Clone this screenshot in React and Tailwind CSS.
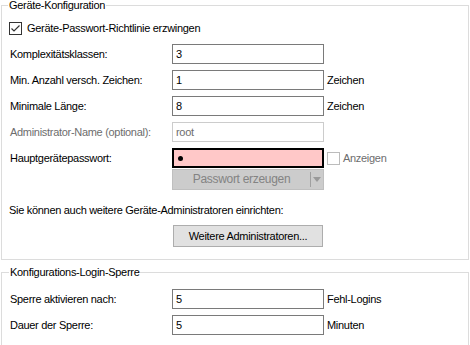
import React from "react";

const font = { fontFamily: '"Liberation Sans", Arial, sans-serif' };

const TextBox = ({ value }) => (
  <div className="w-[152px] h-[20px] border border-[#7a7a7a] bg-white pl-[3px] flex items-center text-black">
    {value}
  </div>
);

const Row = ({ label, value, suffix, className = "" }) => (
  <div className={`flex items-center h-[20px] ${className}`}>
    <div className="w-[162px]">{label}</div>
    <TextBox value={value} />
    {suffix && <span className="ml-[3px]">{suffix}</span>}
  </div>
);

const CheckIcon = () => (
  <svg width="13" height="13" viewBox="0 0 13 13" className="block">
    <rect x="0.5" y="0.5" width="12" height="12" fill="white" stroke="#333333" />
    <path d="M2.5 6.5 L5 9 L10.5 3.5" fill="none" stroke="#333333" strokeWidth="1.2" />
  </svg>
);

export default function App() {
  return (
    <div
      className="w-[470px] h-[345px] bg-white text-black text-[11px] leading-[13px] tracking-[-0.3px] overflow-hidden"
      style={font}
    >
      <fieldset className="ml-[1px] -mt-[1px] w-[468px] border border-[#dcdcdc] pl-[8px] pr-0 pb-[12px]">
        <legend className="-ml-[2px] px-[1px]">Geräte-Konfiguration</legend>

        <label className="mt-[8px] flex items-center h-[16px] -ml-[1px]">
          <CheckIcon />
          <span className="ml-[5px]">Geräte-Passwort-Richtlinie erzwingen</span>
        </label>

        <Row className="mt-[8px]" label="Komplexitätsklassen:" value="3" />
        <Row className="mt-[6px]" label="Min. Anzahl versch. Zeichen:" value="1" suffix="Zeichen" />
        <Row className="mt-[6px]" label="Minimale Länge:" value="8" suffix="Zeichen" />

        <div className="mt-[6px] flex items-center h-[20px]">
          <div className="w-[162px] text-[#6d6d6d]">Administrator-Name (optional):</div>
          <div className="w-[152px] h-[20px] border border-[#cccccc] pl-[3px] flex items-center text-[#6d6d6d]">
            root
          </div>
        </div>

        <div className="mt-[6px] flex items-center h-[20px]">
          <div className="w-[162px]">Hauptgerätepasswort:</div>
          <div className="w-[152px] h-[20px] border-2 border-black bg-[#ffc8c8] pl-[4px] flex items-center">
            <span className="w-[5px] h-[5px] rounded-full bg-black"></span>
          </div>
          <div className="ml-[3px] w-[13px] h-[13px] border border-[#bcbcbc] bg-white"></div>
          <span className="ml-[3px] text-[#6d6d6d]">Anzeigen</span>
        </div>

        <div className="mt-[1px] flex h-[21px]">
          <div className="w-[162px]"></div>
          <div className="w-[152px] h-[21px] border border-[#bfbfbf] bg-[#cccccc] flex items-center text-[#838383] text-[12px]">
            <div className="flex-1 text-center">Passwort erzeugen</div>
            <div className="w-px h-[15px] bg-[#a0a0a0]"></div>
            <div className="w-[12px] flex justify-center">
              <svg width="8" height="5" viewBox="0 0 8 5">
                <path d="M0 0 L8 0 L4 5 Z" fill="#9a9a9a" />
              </svg>
            </div>
          </div>
        </div>

        <div className="mt-[14px] -ml-[1px]">Sie können auch weitere Geräte-Administratoren einrichten:</div>

        <div className="mt-[8px] flex h-[22px]">
          <div className="w-[163px]"></div>
          <div className="w-[150px] h-[22px] border border-[#adadad] bg-[#e1e1e1] flex items-center justify-center">
            Weitere Administratoren...
          </div>
        </div>
      </fieldset>

      <fieldset className="ml-[1px] mt-[6px] w-[468px] h-[80px] border border-[#dcdcdc] pl-[8px] pr-0">
        <legend className="-ml-[1px] px-[1px]">Konfigurations-Login-Sperre</legend>
        <Row className="mt-[10px]" label="Sperre aktivieren nach:" value="5" suffix="Fehl-Logins" />
        <Row className="mt-[6px]" label="Dauer der Sperre:" value="5" suffix="Minuten" />
      </fieldset>
    </div>
  );
}
